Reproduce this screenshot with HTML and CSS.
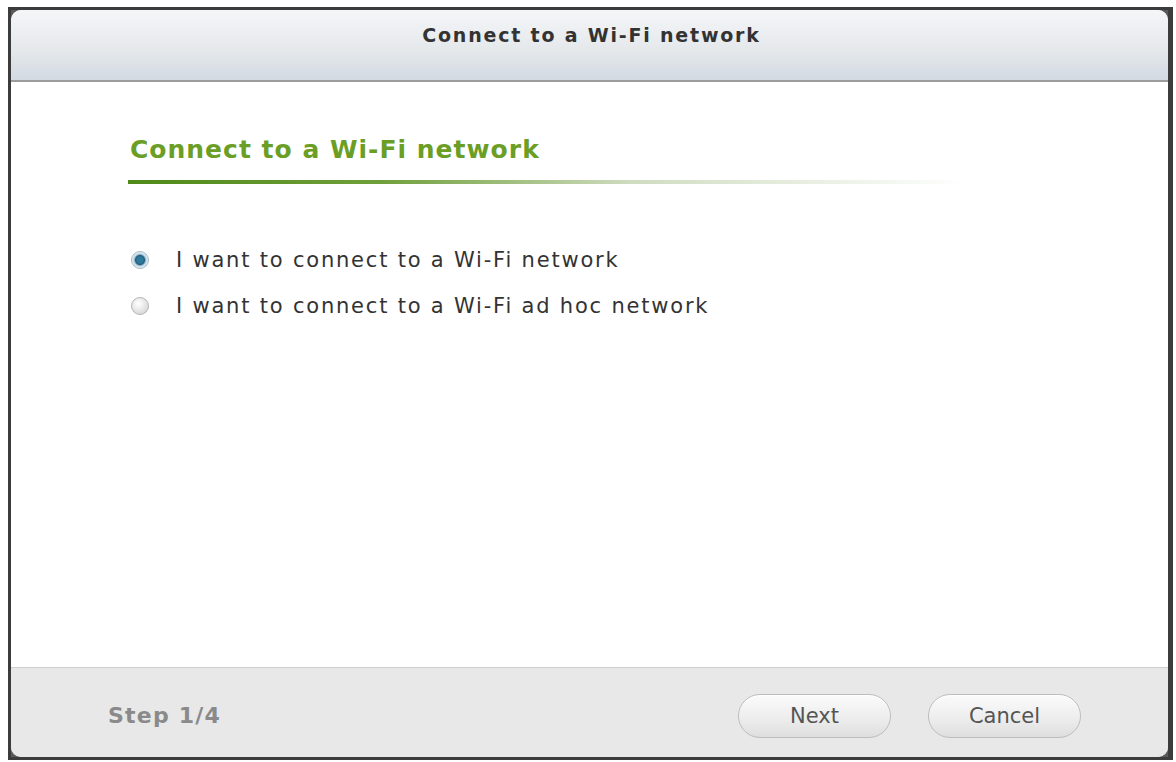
FILE: index.html
```html
<!DOCTYPE html>
<html>
<head>
<meta charset="utf-8">
<link rel="stylesheet" href="styles.css">
</head>
<body>
<div class="frame">
  <div class="dialog">
    <div class="titlebar">Connect to a Wi-Fi network</div>
    <div class="content">
      <h1 class="heading">Connect to a Wi-Fi network</h1>
      <div class="rule"></div>
      <div class="options">
        <label class="option"><span class="radio checked"></span><span>I want to connect to a Wi-Fi network</span></label>
        <label class="option"><span class="radio"></span><span>I want to connect to a Wi-Fi ad hoc network</span></label>
      </div>
    </div>
    <div class="footer">
      <div class="step">Step 1/4</div>
      <div class="buttons">
        <button class="btn">Next</button>
        <button class="btn">Cancel</button>
      </div>
    </div>
  </div>
</div>
</body>
</html>
```
FILE: styles.css
```css
html, body {
  margin: 0;
  padding: 0;
  background: #ffffff;
}
body {
  font-family: "DejaVu Sans", Verdana, sans-serif;
}
.frame {
  margin: 7px 0 0 8px;
  width: 1157px;
  height: 747px;
  border: 3px solid #3c3c3c;
  border-right-width: 5px;
  background: #5a5a5a;
}
.dialog {
  height: 100%;
  display: flex;
  flex-direction: column;
  border-radius: 10px;
  overflow: hidden;
  background: #e9e9e9;
}
.titlebar {
  height: 72px;
  flex: none;
  box-sizing: border-box;
  display: flex;
  align-items: center;
  justify-content: center;
  padding: 0 0 20px 4px;
  font-weight: bold;
  font-size: 19px;
  letter-spacing: 1.8px;
  color: #333;
  background: linear-gradient(#f4f6f8, #e6e9ec 55%, #d2dae2);
  border-bottom: 2px solid #9c9c9c;
}
.content {
  flex: 1;
  background: #ffffff;
  padding: 52px 0 0 119px;
  border-bottom: 1px solid #cfcfcf;
}
.heading {
  margin: 0;
  font-size: 25px;
  line-height: 32px;
  font-weight: bold;
  letter-spacing: 1px;
  color: #6b9e25;
}
.rule {
  margin: 14px 0 0 -2px;
  width: 840px;
  height: 4px;
  background: linear-gradient(90deg, #4f8a18 0%, #6f9f3a 30%, #cfdcc0 60%, rgba(255,255,255,0) 100%);
}
.options {
  margin-top: 62px;
  display: flex;
  flex-direction: column;
  gap: 18px;
  margin-left: 1px;
}
.option {
  display: flex;
  align-items: center;
  gap: 27px;
  font-size: 21px;
  line-height: 28px;
  letter-spacing: 1.8px;
  color: #333;
}
.radio {
  flex: none;
  width: 18px;
  height: 18px;
  border-radius: 50%;
  box-sizing: border-box;
  border: 1px solid #b5b5b5;
  background: radial-gradient(circle at 40% 35%, #ffffff, #dcdcdc 70%, #c8c8c8);
}
.radio.checked {
  border-color: #9fb9c9;
  background: radial-gradient(circle, #2f7a9c 0 3px, #1f5f80 4.5px, #bcd3df 6px, #eaf2f6 8px);
}
.footer {
  height: 89px;
  flex: none;
  box-sizing: border-box;
  display: flex;
  align-items: center;
  justify-content: space-between;
  padding: 6px 87px 0 97px;
  background: #e8e8e8;
}
.step {
  font-size: 22px;
  font-weight: bold;
  letter-spacing: 1.2px;
  color: #8a8a8a;
}
.buttons {
  display: flex;
  gap: 37px;
}
.btn {
  width: 153px;
  height: 44px;
  border-radius: 22px;
  border: 1px solid #bdbdbd;
  background: linear-gradient(#fbfbfb, #ececec 60%, #dedede);
  font-family: "DejaVu Sans", Verdana, sans-serif;
  font-size: 21px;
  color: #555;
  box-shadow: inset 0 1px 0 #fff;
}
```
